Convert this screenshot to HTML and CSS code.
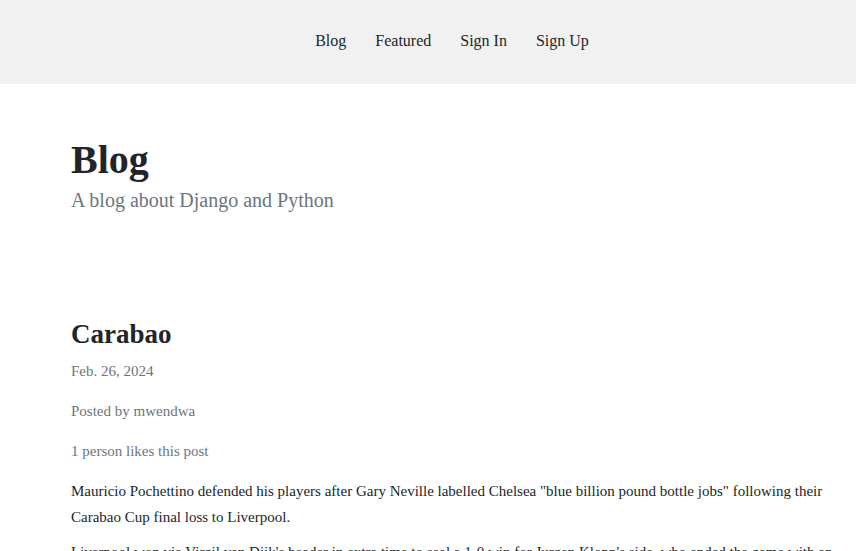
FILE: index.html
```html
<!DOCTYPE html>
<html lang="en">
<head>
<meta charset="utf-8">
<title>Blog</title>
<link rel="stylesheet" href="styles.css">
</head>
<body>
<nav class="topnav">
  <a href="#" class="nav-link">Blog</a>
  <a href="#" class="nav-link">Featured</a>
  <a href="#" class="nav-link">Sign In</a>
  <a href="#" class="nav-link">Sign Up</a>
</nav>
<header class="masthead">
  <h1 class="site-title">Blog</h1>
  <p class="site-sub">A blog about Django and Python</p>
</header>
<main class="content">
  <article class="post">
    <h2 class="post-title">Carabao</h2>
    <p class="meta">Feb. 26, 2024</p>
    <p class="meta">Posted by mwendwa</p>
    <p class="meta">1 person likes this post</p>
    <p class="body">Mauricio Pochettino defended his players after Gary Neville labelled Chelsea "blue billion pound bottle jobs" following their Carabao Cup final loss to Liverpool.</p>
    <p class="body">Liverpool won via Virgil van Dijk's header in extra time to seal a 1-0 win for Jurgen Klopp's side, who ended the game with an inexperienced team.</p>
  </article>
</main>
</body>
</html>
```
FILE: styles.css
```css
html, body {
  margin: 0;
  padding: 0;
  background: #ffffff;
}
body {
  font-family: "Liberation Serif", "Times New Roman", serif;
  color: #212529;
  overflow: hidden;
}
.topnav {
  background: #f1f1f1;
  height: 84px;
  display: flex;
  justify-content: center;
  align-items: center;
  gap: 29px;
  padding: 0 0 2px 48px;
  box-sizing: border-box;
}
.nav-link {
  font-size: 16px;
  color: #212529;
  text-decoration: none;
}
.masthead {
  padding: 52px 16px 0 71px;
}
.site-title {
  margin: 0;
  font-size: 40px;
  line-height: 48px;
  font-weight: 700;
}
.site-sub {
  margin: 3px 0 0;
  font-size: 20px;
  line-height: 26px;
  color: #6c757d;
}
.content {
  padding: 103px 16px 0 71px;
}
.post-title {
  margin: 0;
  font-size: 27px;
  line-height: 36px;
  font-weight: 700;
}
.meta {
  margin: 6px 0 0;
  font-size: 15px;
  line-height: 26px;
  color: #6c757d;
}
.meta + .meta {
  margin-top: 14px;
}
.body {
  margin: 14px 0 0;
  font-size: 15px;
  line-height: 26px;
}
.body + .body {
  margin-top: 9px;
}
```
